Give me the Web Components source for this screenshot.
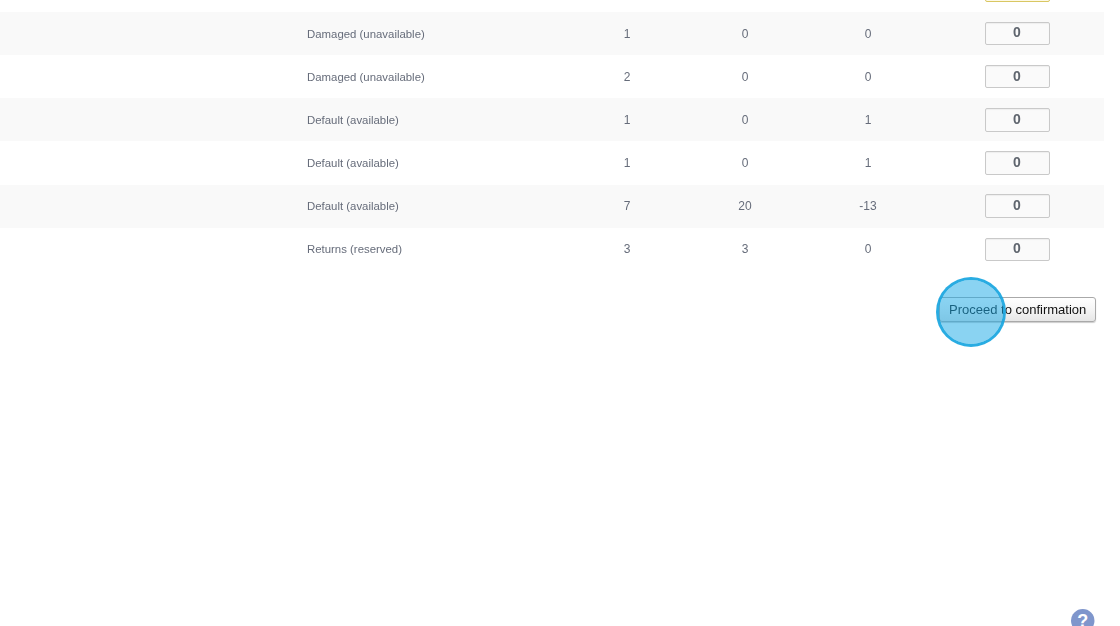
<!DOCTYPE html>
<html><head><meta charset="utf-8">
<style>
html,body{margin:0;padding:0;height:626px;overflow:hidden;background:#fff;font-family:"Liberation Sans",Arial,sans-serif}
</style></head><body>
<template id="t-row"><style>
:host{display:grid;grid-template-columns:260px 120px 116px 130px 168px;height:43.18px;align-items:center;padding:0 3px 0 307px;width:794px;font-size:11.4px;color:#666c7a;background:var(--bg,#fff)}
.n{text-align:center;font-size:12px;line-height:16px;position:relative;top:.1px;will-change:transform}
.name{line-height:16px;position:relative;top:.1px;will-change:transform}
.in{justify-self:center;box-sizing:border-box;width:65px;height:23.5px;border:1px solid #c9c9c9;border-radius:2px;background:#fafafa;color:#5f656e;font-weight:700;font-size:14px;display:flex;align-items:center;justify-content:center;padding-bottom:2px;box-shadow:inset 0 1px 1px rgba(0,0,0,.05)}
.in span{will-change:transform}
:host([warn]) .in{border-color:#d9c763;background:#fdf9e6}
</style><div class="name"><slot></slot></div><div class="n" id="a"></div><div class="n" id="b"></div><div class="n" id="c"></div><div class="in"><span id="v"></span></div></template>
<template id="t-page"><style>
:host{display:block;position:relative;width:1120px;height:626px;overflow:hidden}
.list{margin-top:-31.3px;display:flex;flex-direction:column;width:1104px}
.foot{display:flex;justify-content:flex-end;padding:26px 8px 0 0}
::slotted(stock-row:nth-child(even)){--bg:#f9f9f9}
.help{position:absolute;left:1071px;top:609px}
</style><div class="list"><slot></slot><div class="foot"><slot name="action"></slot></div></div>
<svg class="help" width="24" height="24" viewBox="0 0 24 24"><circle cx="11.75" cy="11.75" r="11.75" fill="#7f96cc"/><text x="11.75" y="18" text-anchor="middle" font-family="Liberation Sans" font-weight="700" font-size="18" fill="#fff">?</text></svg>
</template>
<template id="t-btn"><style>
:host{display:inline-block;position:relative}
button{font:13px "Liberation Sans",Arial,sans-serif;color:#111;height:25px;width:157px;padding:0;border:1px solid #a9a9a9;border-radius:3px;background:linear-gradient(#fff 0%,#f5f5f5 50%,#e6e6e6 100%);box-shadow:0 1px 1px rgba(0,0,0,.2);display:block}
button span{will-change:transform;display:inline-block}
.spot{position:absolute;left:-3.3px;top:-19.7px;box-sizing:border-box;width:70.4px;height:70.4px;border-radius:50%;border:3.5px solid rgba(23,165,224,.92);background:rgba(30,170,230,.52);background-clip:padding-box;pointer-events:none;will-change:transform}
</style><button><span><slot></slot></span></button><div class="spot"></div></template>
<stock-page>
<stock-row warn></stock-row>
<stock-row a="1" b="0" c="0" v="0">Damaged (unavailable)</stock-row>
<stock-row a="2" b="0" c="0" v="0">Damaged (unavailable)</stock-row>
<stock-row a="1" b="0" c="1" v="0">Default (available)</stock-row>
<stock-row a="1" b="0" c="1" v="0">Default (available)</stock-row>
<stock-row a="7" b="20" c="-13" v="0">Default (available)</stock-row>
<stock-row a="3" b="3" c="0" v="0">Returns (reserved)</stock-row>
<spot-button slot="action">Proceed to confirmation</spot-button>
</stock-page>
<script>
function mk(name,tid,init){customElements.define(name,class extends HTMLElement{constructor(){super();const s=this.attachShadow({mode:'open'});s.appendChild(document.getElementById(tid).content.cloneNode(true));}connectedCallback(){init&&init.call(this)}});}
mk('stock-row','t-row',function(){for(const k of ['a','b','c','v'])this.shadowRoot.getElementById(k).textContent=this.getAttribute(k)||''});
mk('stock-page','t-page');
mk('spot-button','t-btn');
</script>
</body></html>
